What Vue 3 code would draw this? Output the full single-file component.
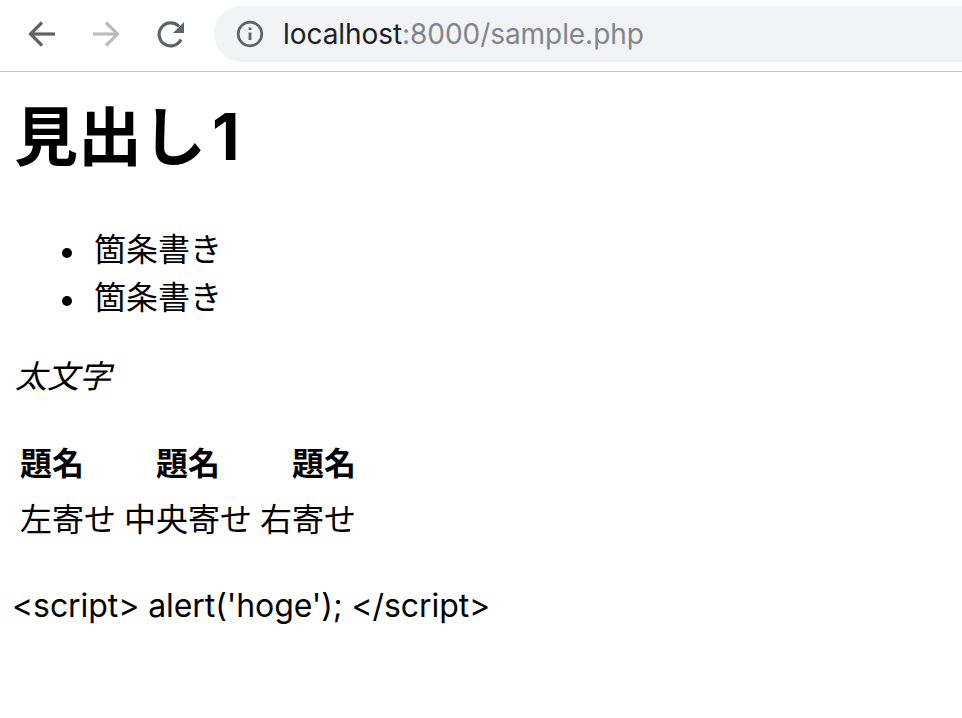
<template>
  <div class="page">
    <div class="toolbar">
      <svg class="nav" viewBox="0 0 32 32" fill="none" stroke="#5f6368" stroke-width="3.200"><path d="M29 16H6" /><path d="M16 4.500 4.500 16 16 27.500" /></svg>
      <svg class="nav" viewBox="0 0 32 32" fill="none" stroke="#bdbdbd" stroke-width="3.200"><path d="M3 16h23" /><path d="M16 4.500 27.500 16 16 27.500" /></svg>
      <svg class="nav" viewBox="0 0 32 32" fill="none" stroke="#5f6368" stroke-width="3.200"><path d="M27 21.500a11.500 11.500 0 1 1-2-13" /><path d="M30 4v11H19z" fill="#5f6368" stroke="none" /></svg>
      <div class="omnibox">
        <svg class="info" viewBox="0 0 28 28" fill="none"><circle cx="14" cy="14" r="11.800" stroke="#5f6368" stroke-width="2.700" /><path d="M14 12.500v7.500M14 7.500v2.600" stroke="#5f6368" stroke-width="2.800" /></svg>
        <span class="url">localhost<span class="dim">:8000/sample.php</span></span>
      </div>
    </div>
    <main class="content">
      <h1>見出し<span class="num">1</span></h1>
      <ul>
        <li>箇条書き</li>
        <li>箇条書き</li>
      </ul>
      <p class="em">太文字</p>
      <table>
        <thead>
          <tr><th class="left">題名</th><th class="center">題名</th><th class="right">題名</th></tr>
        </thead>
        <tbody>
          <tr><td class="left">左寄せ</td><td class="center">中央寄せ</td><td class="right">右寄せ</td></tr>
        </tbody>
      </table>
      <p class="code">&lt;script&gt; alert('hoge'); &lt;/script&gt;</p>
    </main>
  </div>
</template>

<script setup>
</script>

<style scoped>
.page {
  width: 962px;
  height: 718px;
  overflow: hidden;
  background: #fff;
  color: #000;
  font-family: "Inter", "Noto Sans CJK JP", sans-serif;
}

.toolbar {
  height: 72px;
  box-sizing: border-box;
  padding: 6px 0 9px 26px;
  display: flex;
  align-items: center;
  border-bottom: 1px solid #c4c4c4;
}

.nav {
  width: 32px;
  height: 32px;
  margin-right: 32px;
  flex-shrink: 0;
}

.omnibox {
  flex: 1;
  height: 56px;
  margin-left: -4px;
  margin-right: -30px;
  padding-left: 22px;
  display: flex;
  align-items: center;
  gap: 19px;
  background: #f1f3f4;
  border-radius: 28px;
}

.info {
  width: 28px;
  height: 28px;
}

.url {
  font-size: 28px;
  letter-spacing: -0.06px;
  color: #202124;
}

.dim {
  color: #80868b;
}

.content {
  padding: 0 15px;
}

h1 {
  margin: 27px 0 0 -1px;
  font-size: 64px;
  line-height: 76px;
  font-weight: 700;
}

.num {
  margin-left: 6px;
}

ul {
  margin: 51px 0 0;
  padding-left: 47px;
  font-size: 32px;
  line-height: 48px;
  list-style: none;
}

li {
  display: flex;
  align-items: center;
  gap: 22px;
}

li::before {
  content: "";
  width: 10px;
  height: 10px;
  margin-top: 6px;
  border-radius: 50%;
  background: #000;
}

.em {
  margin: 31px 0 0;
  font-size: 32px;
  line-height: 48px;
  font-style: italic;
}

table {
  margin: 33px 0 0 -1px;
  border-spacing: 4px;
  font-size: 32px;
  line-height: 48px;
}

th,
td {
  padding: 2px;
}

.left {
  text-align: left;
}

.center {
  text-align: center;
}

.right {
  text-align: right;
}

.code {
  margin: 32px 0 0 -3px;
  font-size: 32px;
  line-height: 48px;
  letter-spacing: -0.08px;
}
</style>
